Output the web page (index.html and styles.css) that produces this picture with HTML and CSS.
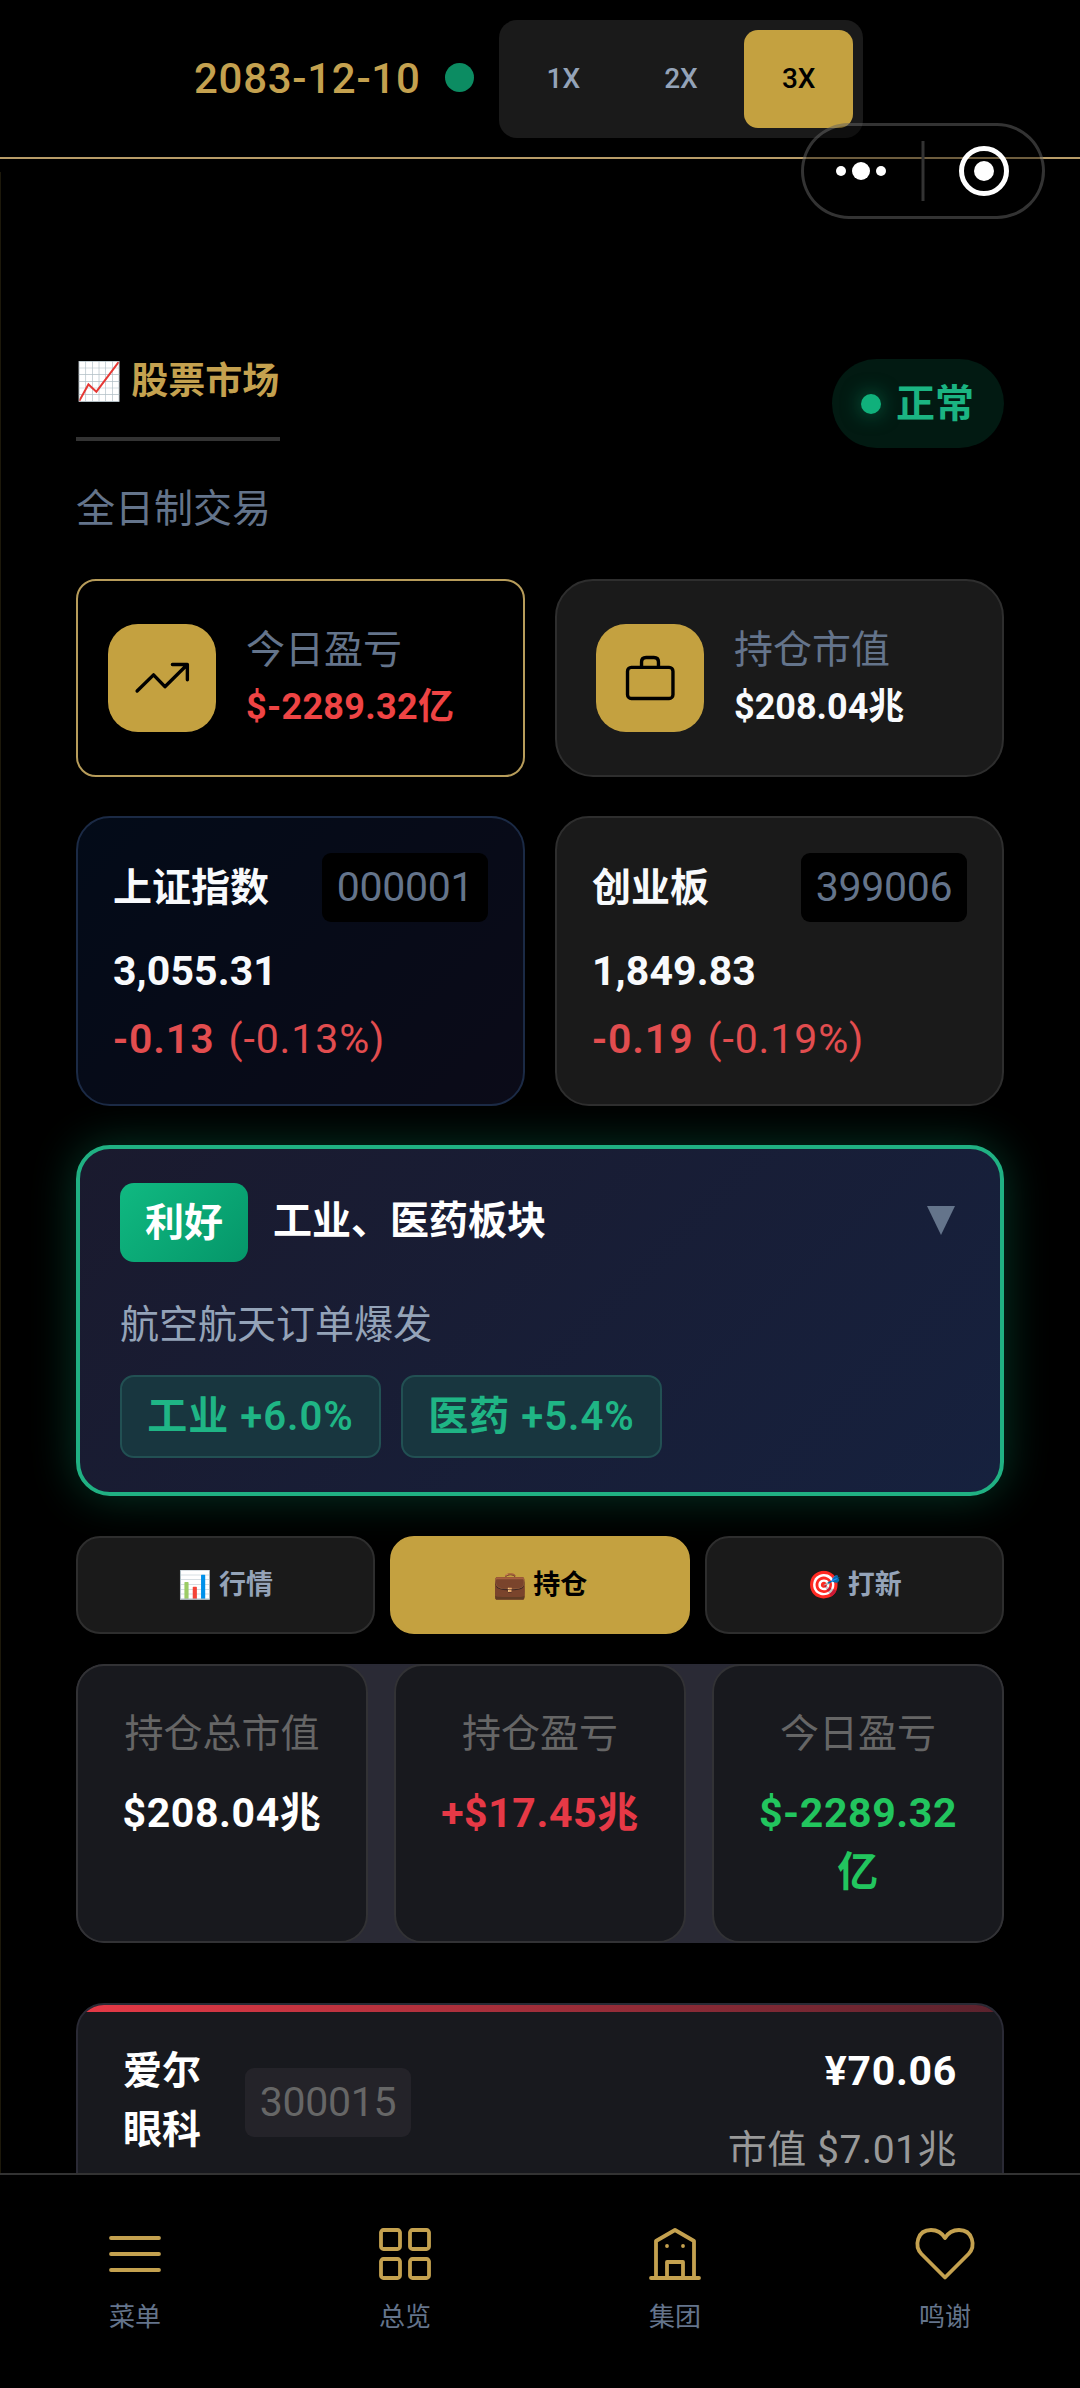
FILE: index.html
```html
<!DOCTYPE html>
<html lang="zh-CN">
<head>
<meta charset="utf-8">
<title>股票市场</title>
<link rel="stylesheet" href="styles.css">
</head>
<body>
<div class="app">
  <header class="topbar">
    <span class="date">2083-12-10</span>
    <i class="live-dot"></i>
    <div class="speed">
      <button class="speed-btn">1X</button>
      <button class="speed-btn">2X</button>
      <button class="speed-btn active">3X</button>
    </div>
  </header>
  <div class="capsule">
    <svg class="capsule-icon" viewBox="0 0 244 96">
      <circle cx="40" cy="48" r="5"/><circle cx="60" cy="48" r="9"/><circle cx="80" cy="48" r="5"/>
      <rect class="capsule-divider" x="120.500" y="18" width="3" height="60"/>
      <circle class="capsule-ring" cx="183" cy="48" r="22.500"/><circle cx="183" cy="48" r="10"/>
    </svg>
  </div>

  <main class="content">
    <section class="page-head">
      <div>
        <h1 class="page-title"><span class="emoji">📈</span> 股票市场</h1>
        <p class="subtitle">全日制交易</p>
      </div>
      <div class="status"><i class="status-dot"></i>正常</div>
    </section>

    <section class="pair stats">
      <div class="stat primary">
        <div class="stat-icon"><svg viewBox="0 0 24 24"><path d="M1.700 17.400 8.500 10.700l4.700 4.900L22.400 6.500M16.300 6.400h6.200v6.300"/></svg></div>
        <div><div class="stat-label">今日盈亏</div><div class="stat-value down">$-2289.32亿</div></div>
      </div>
      <div class="stat">
        <div class="stat-icon"><svg viewBox="0 0 24 24"><rect x="2.700" y="7.600" width="18.800" height="12.900" rx="1.600"/><path d="M8.500 7.600V5.400q0-1.900 1.900-1.900h3.200q1.900 0 1.900 1.900v2.200"/></svg></div>
        <div><div class="stat-label">持仓市值</div><div class="stat-value">$208.04兆</div></div>
      </div>
    </section>

    <section class="pair indices">
      <div class="index featured">
        <div class="index-head"><b>上证指数</b><span class="code">000001</span></div>
        <div class="index-price">3,055.31</div>
        <div class="index-change"><b>-0.13</b><span>(-0.13%)</span></div>
      </div>
      <div class="index">
        <div class="index-head"><b>创业板</b><span class="code">399006</span></div>
        <div class="index-price">1,849.83</div>
        <div class="index-change"><b>-0.19</b><span>(-0.19%)</span></div>
      </div>
    </section>

    <section class="news">
      <div class="news-head">
        <span class="news-badge">利好</span>
        <span class="news-title">工业、医药板块</span>
        <svg class="news-arrow" viewBox="0 0 28 29"><path d="M0 0h28L14 29z"/></svg>
      </div>
      <p class="news-text">航空航天订单爆发</p>
      <div class="tags"><span class="tag">工业 +6.0%</span><span class="tag">医药 +5.4%</span></div>
    </section>

    <nav class="tabs">
      <button class="tab"><span class="emoji">📊</span> 行情</button>
      <button class="tab active"><span class="emoji">💼</span> 持仓</button>
      <button class="tab"><span class="emoji">🎯</span> 打新</button>
    </nav>

    <section class="summary">
      <div class="sum"><div class="sum-label">持仓总市值</div><div class="sum-value">$208.04兆</div></div>
      <div class="sum"><div class="sum-label">持仓盈亏</div><div class="sum-value gain">+$17.45兆</div></div>
      <div class="sum"><div class="sum-label">今日盈亏</div><div class="sum-value loss">$-2289.32<br>亿</div></div>
    </section>

    <section class="holding">
      <div class="holding-left"><b class="holding-name">爱尔<br>眼科</b><span class="code muted">300015</span></div>
      <div class="holding-right"><b class="holding-price">¥70.06</b><span class="holding-value">市值 $7.01兆</span></div>
    </section>
  </main>

  <footer class="bottombar">
    <a class="nav-item"><svg viewBox="0 0 60 60"><path d="M6 14h48M6 30h48M6 46h48"/></svg>菜单</a>
    <a class="nav-item"><svg viewBox="0 0 60 60"><rect x="6" y="6" width="19" height="19" rx="2.500"/><rect x="35" y="6" width="19" height="19" rx="2.500"/><rect x="6" y="35" width="19" height="19" rx="2.500"/><rect x="35" y="35" width="19" height="19" rx="2.500"/></svg>总览</a>
    <a class="nav-item"><svg viewBox="0 0 60 60"><path d="M6 54h48M11 54V17L30 6l19 11v37M22 54V38h16v16"/><path d="M22 22v.1M38 22v.1"/></svg>集团</a>
    <a class="nav-item"><svg viewBox="0 0 60 60"><path d="M30 53.500 6.500 30C-1 22 2 6 16 6c6 0 11 3 14 8 3-5 8-8 14-8 14 0 17 16 9.500 24z"/></svg>鸣谢</a>
  </footer>
</div>
</body>
</html>
```
FILE: styles.css
```css
* { box-sizing: border-box; margin: 0; padding: 0; }

body {
  background: #000;
  color: #f8fafc;
  font-family: Roboto, "Noto Sans CJK SC", sans-serif;
  font-size: 39px;
}

button { font: inherit; color: inherit; border: 0; background: none; }
svg { display: block; fill: none; stroke: currentColor; stroke-linecap: round; stroke-linejoin: round; }
b { font-weight: 600; }

.app {
  position: relative;
  display: flex;
  flex-direction: column;
  height: 2388px;
  overflow: hidden;
}

.topbar {
  display: flex;
  align-items: center;
  flex: none;
  height: 159px;
  padding-left: 194px;
  border-bottom: 2px solid #b89c68;
}
.date { width: 251px; color: #c4a14f; font-size: 42px; font-weight: 500; letter-spacing: .7px; line-height: 58px; white-space: nowrap; }
.live-dot { width: 29px; height: 29px; margin-bottom: 3px; border-radius: 50%; background: #0c8c62; }
.speed {
  display: flex;
  gap: 9px;
  width: 364px;
  height: 118px;
  margin-left: 25px;
  padding: 10px;
  border-radius: 18px;
  background: #1a1a1a;
}
.speed-btn { flex: 1; border-radius: 14px; color: #94a3b8; font-size: 28px; font-weight: 500; }
.speed-btn.active { background: #c4a140; color: #000; }

.capsule {
  position: absolute;
  top: 123px;
  left: 801px;
  width: 244px;
  height: 96px;
  border-radius: 48px;
  background: rgba(0, 0, 0, .4);
  box-shadow: inset 0 0 0 3px rgba(255, 255, 255, .2);
}
.capsule-icon { fill: #fff; stroke: none; }
.capsule-divider { fill: #333; }
.capsule-ring { fill: none; stroke: #fff; stroke-width: 5; }

.content {
  flex: 1;
  min-height: 0;
  margin-top: 13px;
  padding: 187px 76px 0 75px;
  border-left: 1px solid #1c180a;
}

.page-head { display: flex; justify-content: space-between; height: 220px; }
.page-title {
  width: 204px;
  height: 82px;
  padding-top: 2px;
  border-bottom: 4px solid #333;
  color: #c4a14f;
  font-size: 37px;
  font-weight: 600;
  line-height: 42px;
  white-space: nowrap;
}
.subtitle { margin-top: 39px; color: #64748b; line-height: 58px; }
.status {
  display: flex;
  align-items: center;
  gap: 15px;
  width: 172px;
  height: 89px;
  padding-left: 29px;
  border-radius: 45px;
  background: #021a12;
  color: #1bb482;
  font-weight: 600;
  line-height: 58px;
}
.status-dot { width: 20px; height: 20px; border-radius: 50%; background: #10b07b; box-shadow: 0 0 20px rgba(16, 185, 129, .5); }

.pair { display: grid; grid-template-columns: 1fr 1fr; gap: 30px; }
.stat {
  display: flex;
  align-items: center;
  gap: 30px;
  height: 198px;
  padding-left: 39px;
  border: 2px solid #2e2e2e;
  border-radius: 38px;
  background: #1a1a1a;
}
.stat.primary { padding-left: 30px; border-color: #b79c5a; border-radius: 20px; background: #000; }
.stat-icon { display: grid; place-items: center; width: 108px; height: 108px; border-radius: 30px; background: #c4a140; color: #000; }
.stat-icon svg { width: 58px; height: 58px; stroke-width: 1.400; }
.stat-label { color: #64748b; line-height: 58px; }
.stat-value { font-size: 36px; font-weight: 700; line-height: 56px; }
.stat-value.down { letter-spacing: .3px; }
.down { color: #ef4444; }

.indices { margin-top: 39px; }
.index { height: 290px; padding: 35px 35px 0; border: 2px solid #2e2e2e; border-radius: 34px; background: #1a1a1a; }
.index.featured { border-color: #1b2a45; background: linear-gradient(135deg, #030b18, #0b0b18); }
.index-head { display: flex; align-items: center; justify-content: space-between; line-height: 58px; }
.code { display: grid; place-items: center; width: 166px; height: 69px; border-radius: 9px; background: #000; color: #64748b; font-size: 41px; letter-spacing: -.3px; line-height: 69px; }
.index-price { margin-top: 20px; font-size: 41px; font-weight: 700; letter-spacing: .1px; line-height: 58px; }
.index-change { display: flex; gap: 14px; margin-top: 10px; color: #e24d4f; font-size: 41px; letter-spacing: .9px; line-height: 58px; }

.news {
  height: 351px;
  margin-top: 39px;
  padding: 34px 40px 0;
  border: 4px solid #20b183;
  border-radius: 34px;
  background: linear-gradient(135deg, #1a1a2e, #16213e);
  box-shadow: 0 0 45px rgba(16, 185, 129, .3);
}
.news-head { display: flex; align-items: center; height: 79px; line-height: 58px; }
.news-badge {
  display: grid;
  place-items: center;
  width: 128px;
  height: 79px;
  border-radius: 14px;
  background: linear-gradient(135deg, #10b981, #059669);
  color: #fff;
  font-weight: 700;
}
.news-title { margin: 0 0 3px 25px; color: #fff; font-weight: 600; }
.news-arrow { width: 28px; height: 29px; margin: 0 5px 4px auto; fill: #64748b; stroke: none; }
.news-text { margin-top: 34px; color: #94a3b8; line-height: 58px; }
.tags { display: flex; gap: 20px; margin-top: 21px; }
.tag { display: grid; place-items: center; width: 261px; height: 83px; border: 2px solid #225053; border-radius: 14px; background: #18363f; color: #1fb585; font-size: 40px; font-weight: 600; letter-spacing: 1px; line-height: 58px; }

.tabs { display: grid; grid-template-columns: repeat(3, 1fr); gap: 15px; margin-top: 40px; }
.tab { height: 98px; padding-bottom: 5px; border: 2px solid #2e2e2e; border-radius: 24px; background: #1a1a1a; color: #94a3b8; font-size: 27px; font-weight: 600; }
.tab.active { border-color: #c4a140; background: #c4a140; color: #000; }

.summary { display: grid; grid-template-columns: repeat(3, 1fr); gap: 26px; height: 279px; margin-top: 30px; border-radius: 28px; overflow: hidden; background: #2a2a35; }
.sum { padding-top: 39px; border: 2px solid #323235; border-radius: 28px; background: #18191e; text-align: center; line-height: 59px; }
.sum-label { color: #666; }
.sum-value { margin-top: 20px; color: #fff; font-size: 41px; font-weight: 700; letter-spacing: .6px; }
.sum-value.gain { color: #e63946; }
.sum-value.loss { color: #22c55e; }

.holding {
  position: relative;
  display: flex;
  justify-content: space-between;
  height: 300px;
  margin-top: 60px;
  padding: 37px 45px 0;
  border: 2px solid #2a2a35;
  border-radius: 28px;
  overflow: hidden;
  background: #18191e;
  line-height: 59px;
}
.holding::before { content: ""; position: absolute; inset: 0 0 auto; height: 7px; background: linear-gradient(90deg, #e63946, #5a222d); }
.holding-left { display: flex; gap: 44px; }
.holding-name { color: #fff; font-weight: 700; }
.code.muted { margin-top: 26px; background: #242329; color: #666; }
.holding-right { display: flex; flex-direction: column; gap: 20px; text-align: right; }
.holding-price { color: #fff; font-size: 41px; font-weight: 700; letter-spacing: .7px; }
.holding-value { color: #999; letter-spacing: .5px; }

.bottombar {
  position: relative;
  display: grid;
  grid-template-columns: repeat(4, 1fr);
  flex: none;
  height: 215px;
  padding-top: 49px;
  border-top: 2px solid #333;
  background: #000;
}
.nav-item { display: flex; flex-direction: column; align-items: center; gap: 14px; color: #64748b; font-size: 26px; line-height: 38px; }
.nav-item svg { width: 60px; height: 60px; color: #c4a14f; stroke-width: 3.800; overflow: visible; }
```
